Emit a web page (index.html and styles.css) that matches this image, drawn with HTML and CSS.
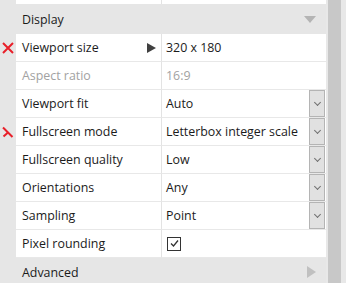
FILE: index.html
```html
<!DOCTYPE html>
<html lang="en">
<head>
  <meta charset="UTF-8" />
  <title>Properties</title>
  <link rel="stylesheet" href="styles.css">
</head>
<body>
  <div class="panel">
    <div class="grid">
      <!-- row cut off at the top -->
      <div class="row partial">
        <span class="gutter"></span>
        <span class="label"></span>
        <span class="value"></span>
      </div>

      <div class="section">
        <span class="section-title">Display</span>
        <span class="caret-down"></span>
      </div>

      <div class="row">
        <span class="gutter">
          <svg class="mark" width="12" height="12" viewBox="0 0 12 12"><path d="M1 1L11 11M11 1L1 11" stroke="#e8202a" stroke-width="2" fill="none"/></svg>
        </span>
        <span class="label">Viewport size <span class="play"></span></span>
        <span class="value">320 x 180</span>
      </div>

      <div class="row disabled">
        <span class="gutter"></span>
        <span class="label">Aspect ratio</span>
        <span class="value">16:9</span>
      </div>

      <div class="row">
        <span class="gutter"></span>
        <span class="label">Viewport fit</span>
        <span class="value"><span class="text">Auto</span><span class="drop"></span></span>
      </div>

      <div class="row">
        <span class="gutter">
          <svg class="mark" width="12" height="12" viewBox="0 0 12 12"><path d="M1 1.5L10.5 11M1.5 10.5L6 6.5" stroke="#e8202a" stroke-width="2" fill="none"/></svg>
        </span>
        <span class="label">Fullscreen mode</span>
        <span class="value"><span class="text">Letterbox integer scale</span><span class="drop"></span></span>
      </div>

      <div class="row">
        <span class="gutter"></span>
        <span class="label">Fullscreen quality</span>
        <span class="value"><span class="text">Low</span><span class="drop"></span></span>
      </div>

      <div class="row">
        <span class="gutter"></span>
        <span class="label">Orientations</span>
        <span class="value"><span class="text">Any</span><span class="drop"></span></span>
      </div>

      <div class="row">
        <span class="gutter"></span>
        <span class="label">Sampling</span>
        <span class="value"><span class="text">Point</span><span class="drop"></span></span>
      </div>

      <div class="row">
        <span class="gutter"></span>
        <span class="label">Pixel rounding</span>
        <span class="value">
          <span class="check">
            <svg width="11" height="11" viewBox="0 0 11 11"><path d="M2 5.5L4.5 8L9 2.5" stroke="#333" stroke-width="1.3" fill="none"/></svg>
          </span>
        </span>
      </div>

      <div class="section">
        <span class="section-title">Advanced</span>
        <span class="caret-right"></span>
      </div>
    </div>

    <div class="scrollbar">
      <div class="thumb"></div>
    </div>
  </div>
</body>
</html>
```

FILE: styles.css
```css
* {
  margin: 0;
  padding: 0;
  box-sizing: border-box;
}

body {
  font-family: 'Open Sans', 'Noto Sans', sans-serif;
  font-size: 12.4px;
  color: #1b1b1b;
  background: #fff;
  overflow: hidden;
  height: 283px;
}

.panel {
  display: flex;
  height: 283px;
}

.grid {
  width: 326px;
  display: flex;
  flex-direction: column;
}

/* Ligne standard : gouttière + nom + valeur */
.row {
  display: grid;
  grid-template-columns: 16px 145px 1fr;
  height: 28px;
  flex-shrink: 0;
}

.row.partial {
  height: 4px;
}

.row.partial .label,
.row.partial .value {
  border-bottom: none;
}

.gutter {
  background: #e6e6e6;
  display: flex;
  align-items: center;
  justify-content: center;
  padding-right: 1px;
}

.label {
  display: flex;
  align-items: center;
  justify-content: space-between;
  padding: 0 5px 0 6px;
  border-bottom: 1px solid #e8e8e8;
  white-space: nowrap;
}

.value {
  display: flex;
  align-items: center;
  padding-left: 4px;
  border-left: 1px solid #e3e3e3;
  border-bottom: 1px solid #e8e8e8;
  white-space: nowrap;
}

.value .text {
  flex: 1;
}

.row.disabled {
  color: #a2a2a2;
}

.play {
  width: 0;
  height: 0;
  border-top: 5px solid transparent;
  border-bottom: 5px solid transparent;
  border-left: 9px solid #404040;
}

/* Bouton de liste déroulante */
.drop {
  width: 16px;
  height: 27px;
  margin-right: 1px;
  background: #e1e1e1;
  border: 1px solid #b4b4b4;
  position: relative;
}

.drop::after {
  content: '';
  position: absolute;
  left: 5px;
  top: 9px;
  width: 4px;
  height: 4px;
  border: solid #707070;
  border-width: 0 1px 1px 0;
  transform: rotate(45deg);
}

.check {
  width: 14px;
  height: 14px;
  margin-left: 1px;
  border: 1px solid #333;
  display: flex;
  align-items: center;
  justify-content: center;
}

/* En-têtes de section */
.section {
  display: flex;
  align-items: center;
  justify-content: space-between;
  height: 30px;
  flex-shrink: 0;
  background: #e6e6e6;
  padding: 0 10px 0 22px;
}

.section:last-child {
  height: 28px;
}

.caret-down {
  width: 0;
  height: 0;
  border-left: 6px solid transparent;
  border-right: 6px solid transparent;
  border-top: 7px solid #b4b4b4;
}

.caret-right {
  width: 0;
  height: 0;
  border-top: 6px solid transparent;
  border-bottom: 6px solid transparent;
  border-left: 9px solid #c0c0c0;
}

/* Barre de défilement */
.scrollbar {
  width: 20px;
  background: #e8e8e8;
  padding-left: 2px;
}

.thumb {
  width: 13px;
  height: 100%;
  background: #c8c8c8;
}
```
